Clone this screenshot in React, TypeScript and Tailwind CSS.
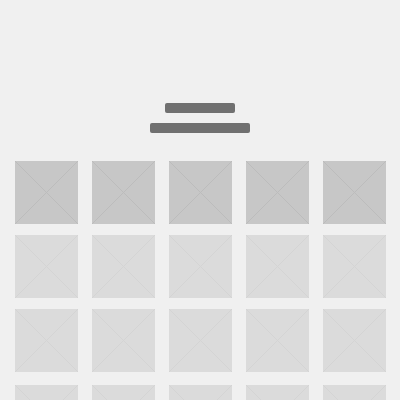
import React from "react";

type Tone = "strong" | "soft";

function Placeholder({ tone }: { tone: Tone }) {
  const strong = tone === "strong";
  return (
    <div className={`aspect-square ${strong ? "bg-[#c7c7c7]" : "bg-[#dbdbdb]"}`}>
      <svg
        viewBox="0 0 63 63"
        className={`block size-full ${strong ? "text-[#bcbcbc]" : "text-[#d4d4d4]"}`}
        fill="none"
        stroke="currentColor"
        strokeWidth="1"
        aria-hidden="true"
      >
        <path d="M0 0L63 63M63 0L0 63" />
      </svg>
    </div>
  );
}

function TileGrid({ rows, tone }: { rows: number; tone: Tone }) {
  return (
    <div className="grid grid-cols-5 gap-x-[14px] gap-y-[11px]">
      {Array.from({ length: rows * 5 }, (_, i) => (
        <Placeholder key={i} tone={tone} />
      ))}
    </div>
  );
}

export default function App() {
  return (
    <main className="h-screen overflow-hidden bg-[#f0f0f0]">
      <header className="flex flex-col items-center gap-[10px] pt-[103px] pb-7">
        <div className="h-[10px] w-[70px] rounded-[2px] bg-[#707070]" />
        <div className="h-[10px] w-[100px] rounded-[2px] bg-[#707070]" />
      </header>
      <section className="flex flex-col gap-[13px] pr-[14px] pl-[15px]">
        <div className="flex flex-col gap-[11px]">
          <TileGrid rows={1} tone="strong" />
          <TileGrid rows={2} tone="soft" />
        </div>
        <TileGrid rows={1} tone="soft" />
      </section>
    </main>
  );
}
